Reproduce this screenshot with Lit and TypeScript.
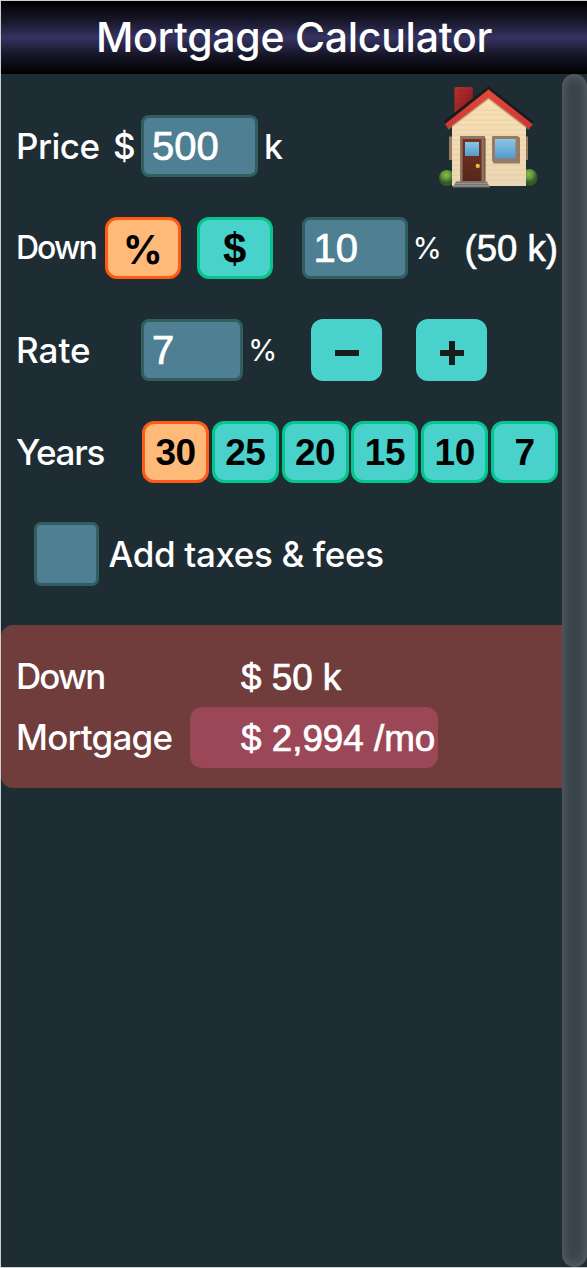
import { LitElement, html, svg, css } from "lit";
import { customElement, property, state } from "lit/decorators.js";
import { classMap } from "lit/directives/class-map.js";

@customElement("house-icon")
class HouseIcon extends LitElement {
  static styles = css`
    :host { display: block; width: 100px; height: 103px; }
    svg { display: block; width: 100%; height: 100%; }
  `;
  render() {
    return html`<svg viewBox="0 0 100 103" aria-hidden="true">
      <defs>
        <linearGradient id="wall" x2="0" y2="1"><stop stop-color="#fae0b0" /><stop offset=".5" stop-color="#f3dcb3" /><stop offset="1" stop-color="#ead7b5" /></linearGradient>
        <linearGradient id="roof" x2="0" y2="1"><stop stop-color="#e5483c" /><stop offset="1" stop-color="#cd3431" /></linearGradient>
        <linearGradient id="brick" x2="1" y2="1"><stop stop-color="#ba312e" /><stop offset=".5" stop-color="#9d2425" /><stop offset="1" stop-color="#4e1718" /></linearGradient>
        <linearGradient id="glass" x2="0" y2="1"><stop stop-color="#8ac6e6" /><stop offset="1" stop-color="#539bcc" /></linearGradient>
        <linearGradient id="door" x2="0" y2="1"><stop stop-color="#773424" /><stop offset="1" stop-color="#57261b" /></linearGradient>
        <radialGradient id="bush" cx=".45" cy=".3"><stop stop-color="#89bb48" /><stop offset=".55" stop-color="#609438" /><stop offset="1" stop-color="#2e5b27" /></radialGradient>
      </defs>
      <path d="M16.500 2.500 Q16.500 1 18 1H33.500Q35 1 35 2.500V18L16.500 31Z" fill="url(#brick)" />
      <path d="M17 5H35M17 9H35M17 13H35M17 17H35M22 1V5M29 5V9M22 9V13M29 13V17" stroke="#7e2424" stroke-width=".6" opacity=".4" />
      <ellipse cx="9" cy="92" rx="8" ry="8" fill="url(#bush)" />
      <ellipse cx="91.500" cy="91.500" rx="8" ry="8.500" fill="url(#bush)" />
      <path d="M11 50.500H15V74H11ZM87 50.500H90V74H87Z" fill="#967b63" />
      <path d="M14 38L51 8L88 38V100H14Z" fill="url(#wall)" />
      ${[24, 29, 34, 39, 44, 49, 54, 59, 64, 69, 74, 79, 84, 89, 94].map(
        (y) => svg`<path d="M${Math.max(14, 50 - (y - 11) * 1.25)} ${y}H${Math.min(88, 51 + (y - 11) * 1.25)}" stroke="#d8be8f" stroke-width=".6" opacity=".6" />`
      )}
      <path d="M10 43L50.500 12L91 43" fill="none" stroke="#9e805b" stroke-width="2" opacity=".7" />
      <path d="M6 35L50.500 0L96 35.500L92 40L50.500 7L8 39Z" fill="#191d1f" />
      <path d="M7 38L50.500 3.500L95 38.500L91 42.500L50.500 11.500L10 42.500Z" fill="url(#roof)" />
      <path d="M22 50H47V96H22Z" fill="#927560" />
      <path d="M45.500 52H48V95H45.500Z" fill="#66503f" opacity=".55" />
      <path d="M24.500 53H43.500V95H24.500Z" fill="url(#door)" />
      <rect x="27" y="56" width="14" height="14" fill="url(#glass)" />
      <circle cx="39.800" cy="80" r="2.200" fill="#e7aa36" /><circle cx="39.300" cy="79.300" r=".8" fill="#ffe58a" />
      <rect x="55" y="51" width="27" height="26.500" rx="1" fill="#6d5646" opacity=".7" />
      <rect x="54" y="50" width="26.500" height="25.500" rx="1" fill="#987b62" />
      <rect x="57" y="53" width="20.500" height="19.500" fill="url(#glass)" />
      <path d="M18 95.500H49L52 101.500H14.500Z" fill="#797572" />
      <path d="M17 97.500H50M15 99.700H51" stroke="#b3a99e" stroke-width=".6" />
    </svg>`;
  }
}

@customElement("choice-button")
class ChoiceButton extends LitElement {
  @property({ type: Boolean }) selected = false;
  static styles = css`
    :host { display: block; height: 61.500px; flex: none; }
    .face {
      width: 100%; height: 100%; box-sizing: border-box; margin: 0; padding: 2px 0 0;
      display: flex; align-items: center; justify-content: center;
      border: 3px solid #04c58b; border-radius: 12px; background: #49d2cc; color: #000;
      font: inherit; font-weight: 700; letter-spacing: inherit;
    }
    .selected { background: #ffb978; border-color: #ff5b16; }
  `;
  render() {
    return html`<button class=${classMap({ face: true, selected: this.selected })}><slot></slot></button>`;
  }
}

@customElement("app-root")
class AppRoot extends LitElement {
  @state() private years = 30;
  @state() private unit = "%";

  static styles = css`
    :host {
      display: flex; flex-direction: column; width: 587px; height: 1268px; box-sizing: border-box;
      border: solid #c9d1d0; border-width: 1px 0 1px 1px; overflow: hidden;
      background: #1e2d33; color: #fff;
      font: 500 35px/61px Inter, "Liberation Sans", sans-serif;
    }
    .title {
      margin: 0; height: 73px; flex: none; display: flex; justify-content: center;
      font-size: 41px; font-weight: 500; line-height: 73px; letter-spacing: -0.27px;
      background: linear-gradient(#000, #181729 27%, #353361 50%, #181729 73%, #000);
    }
    .body { flex: 1; display: flex; min-height: 0; }
    .content { width: 561px; flex: none; display: flex; flex-direction: column; }
    .track {
      width: 25px; flex: none; border-radius: 12.500px;
      background: #39444a; box-shadow: inset 0 0 12px #626a6e;
    }
    .row { display: flex; align-items: center; height: 62px; padding-left: 15px; margin-bottom: 40px; white-space: pre; flex: none; }
    .price { margin-top: 41px; }
    .label { width: 125px; flex: none; padding-top: 1px; }
    .price .label { width: 97px; letter-spacing: -0.5px; }
    .dollar { width: 28px; flex: none; padding-top: 1px; }
    .down .label { width: 88.500px; padding-top: 0; margin-top: -2px; font-size: 32px; letter-spacing: -2px; }
    .years .label { width: 126px; letter-spacing: -1.3px; }
    .num { font-family: "Liberation Sans", sans-serif; font-weight: 400; -webkit-text-stroke: 0.7px #fff; }
    .input {
      box-sizing: border-box; height: 61.500px; flex: none; margin: 0; padding: 1px 8px 0; outline: 0;
      border: 3px solid #315f5f; border-radius: 8px; background: #4e7f93; color: #fff;
      font-size: 40px; line-height: 1;
    }
    .amount { width: 117px; }
    .deposit { width: 106px; margin-left: 28.500px; padding-left: 9px; }
    .rate { width: 102px; }
    .suffix { margin-left: 6px; width: 18px; padding-top: 1px; flex: none; font-size: 34px; }
    .percent { width: 27px; margin-left: 5px; margin-right: 1px; flex: none; font-size: 30px; font-weight: 400; }
    .down .percent { margin-right: 0; }
    .paren { margin-left: 25px; font-size: 36.500px; padding-top: 1px; }
    .house { margin: -17px 0 0 156px; }
    .unit { width: 76.500px; margin-right: 15.500px; font: 700 42px "Liberation Sans", sans-serif; }
    .unit.percentage { font-family: Inter, sans-serif; font-size: 39px; }
    .unit.last { margin-right: 0; }
    .step { width: 71px; height: 61.500px; flex: none; margin-left: 34px; padding: 0; border: 0; border-radius: 12px; background: #49d2cc; display: flex; align-items: center; justify-content: center; }
    .step.first { margin-left: 35px; }
    .terms { display: flex; gap: 2.800px; }
    .term { width: 67px; font: 700 37px "Liberation Sans", sans-serif; letter-spacing: -0.5px; }
    .extras { height: 64px; padding-left: 33px; margin: -1px 0 39px; letter-spacing: -0.37px; }
    .check { appearance: none; width: 64.500px; height: 64.500px; margin: 0 10px 0 0; border: 3px solid #315f5f; border-radius: 7px; background: #4e7f93; box-sizing: border-box; flex: none; }
    .results { height: 163px; box-sizing: border-box; padding: 21px 0 20px 15px; border-radius: 12px 0 0 12px; background: #703d3c; }
    .result { display: flex; height: 61px; white-space: nowrap; }
    .result .label { width: 174px; padding-top: 0; letter-spacing: -0.8px; }
    .result .label.short { letter-spacing: -1.9px; }
    .value { width: 248px; box-sizing: border-box; padding: 1px 0 0 51px; line-height: 61px; font-size: 36.800px; border-radius: 12px; }
    .main { background: #9b4757; }
  `;

  render() {
    return html`
      <h1 class="title">Mortgage Calculator</h1>
      <div class="body">
        <main class="content">
          <div class="row price"
            ><span class="label">Price</span><span class="dollar">$</span>
            <input class="input num amount" value="500" aria-label="Price" />
            <span class="suffix">k</span>
            <house-icon class="house"></house-icon>
          </div>
          <div class="row down">
            <span class="label">Down</span>
            <choice-button class="unit percentage" ?selected=${this.unit === "%"} @click=${() => (this.unit = "%")}>%</choice-button>
            <choice-button class="unit last" ?selected=${this.unit === "$"} @click=${() => (this.unit = "$")}>$</choice-button>
            <input class="input num deposit" value="10" aria-label="Down payment" />
            <span class="percent">%</span><span class="num paren">(50 k)</span>
          </div>
          <div class="row">
            <span class="label">Rate</span>
            <input class="input num rate" value="7" aria-label="Rate" />
            <span class="percent">%</span>
            <button class="step first" aria-label="Decrease"><svg width="24" height="24" viewBox="0 0 24 24"><path d="M0 12H24" transform="translate(0 3)" stroke="#171c1d" stroke-width="6" /></svg></button>
            <button class="step" aria-label="Increase"><svg width="24" height="30" viewBox="0 0 24 30"><path d="M0 18H24M12 6V30" stroke="#171c1d" stroke-width="6" /></svg></button>
          </div>
          <div class="row years">
            <span class="label">Years</span>
            <div class="terms">
              ${[30, 25, 20, 15, 10, 7].map(
                (n) => html`<choice-button class="term" ?selected=${this.years === n} @click=${() => (this.years = n)}>${n}</choice-button>`
              )}
            </div>
          </div>
          <div class="row extras"><input class="check" type="checkbox" aria-label="Add taxes and fees" /><span>Add taxes &amp; fees</span></div>
          <section class="results">
            <div class="result"><span class="label short">Down</span><span class="num value">$ 50 k</span></div>
            <div class="result"><span class="label">Mortgage</span><span class="num value main">$ 2,994 /mo</span></div>
          </section>
        </main>
        <div class="track"></div>
      </div>
    `;
  }
}
